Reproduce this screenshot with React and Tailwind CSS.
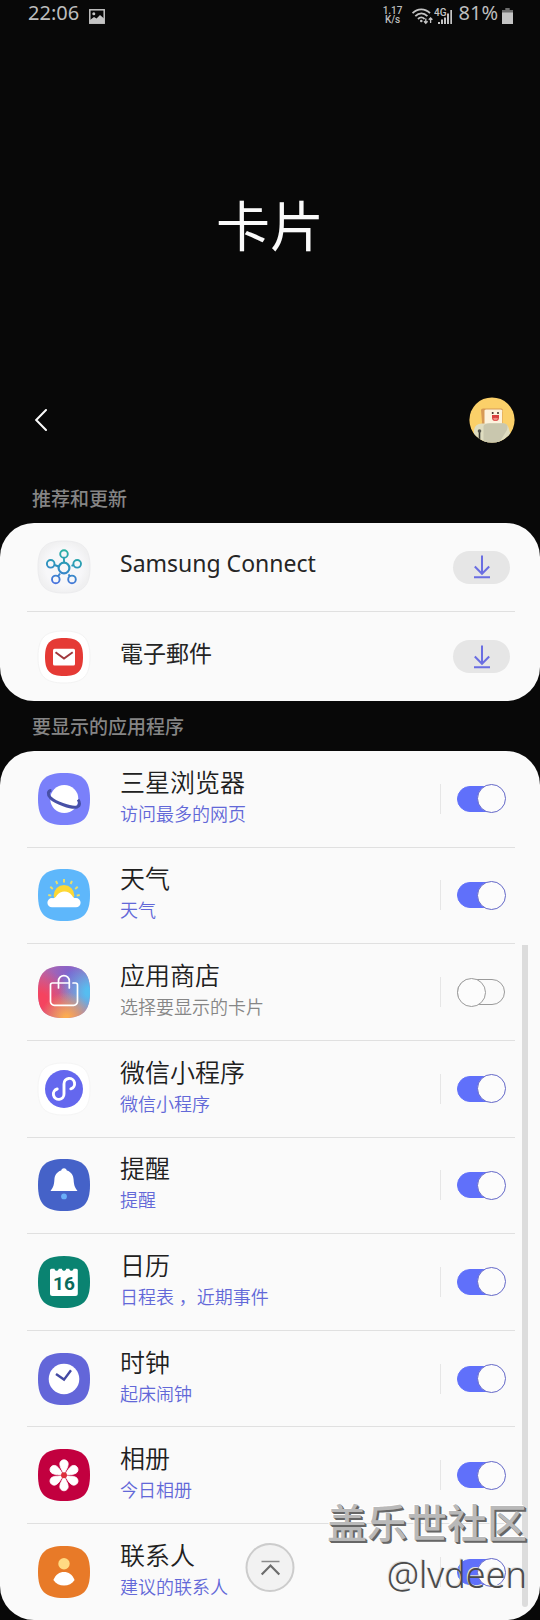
import { useState } from 'react';

const SQUIRCLE = 'M26 0C45 0 52 7 52 26S45 52 26 52 0 45 0 26 7 0 26 0Z';

// App icons
const AppIcon = ({ bg, border, children }) => (
  <svg viewBox="0 0 52 52" className="h-[52px] w-[52px] shrink-0 overflow-visible" aria-hidden="true">
    <path d={SQUIRCLE} fill={bg} stroke={border || 'none'} />
    {children}
  </svg>
);

const ConnectIcon = () => (
  <AppIcon bg="url(#connect-bg)" border="#ececee">
    <defs>
      <radialGradient id="connect-bg">
        <stop offset="0.7" stopColor="#f7f7f9" />
        <stop offset="1" stopColor="#f0f0f1" />
      </radialGradient>
      <linearGradient id="connect" gradientUnits="userSpaceOnUse" x1="30" y1="8" x2="22" y2="43">
        <stop offset="0" stopColor="#2bb5a0" />
        <stop offset="0.5" stopColor="#2c93bd" />
        <stop offset="1" stopColor="#4a74dd" />
      </linearGradient>
    </defs>
    <g fill="none" stroke="url(#connect)" strokeWidth="1.9">
      <circle cx="26" cy="27" r="5.4" strokeWidth="2.2" />
      <circle cx="26" cy="13" r="3.8" />
      <circle cx="12.7" cy="22.8" r="3.8" />
      <circle cx="39.2" cy="22.8" r="3.8" />
      <circle cx="17.8" cy="38.4" r="3.8" />
      <circle cx="34" cy="38.4" r="3.8" />
      <path d="M25.9 17L26.1 21.5M16.5 24L20.7 25.5M35.6 24L33.5 24.8M20.2 35.2L22 32.5M31.8 35.2L30.5 33.4" />
    </g>
  </AppIcon>
);

const EmailIcon = () => (
  <AppIcon bg="#ffffff" border="#f3f3f3">
    <path d="M26 7C40 7 45 12 45 26S40 45 26 45 7 40 7 26 12 7 26 7Z" fill="#e53a35" />
    <rect x="15" y="17.7" width="22" height="16.8" rx="1.5" fill="#fff" />
    <path d="M17.5 21.3L26 27.5L34.7 21.3" fill="none" stroke="#a0383d" strokeWidth="2" />
  </AppIcon>
);

const BrowserIcon = () => (
  <AppIcon bg="#7a80fa">
    <circle cx="26.3" cy="26" r="14" fill="#fff" />
    <path
      d="M13.4 17.6C9.8 17.8 9.2 21.5 12.5 24.8C17.5 29.5 33 35.6 39 34C42.4 32.9 42 29 40 26.6"
      fill="none"
      stroke="#4750a6"
      strokeWidth="3"
    />
  </AppIcon>
);

const WeatherIcon = () => (
  <AppIcon bg="#5eb7fb">
    <circle cx="26" cy="26.3" r="10.3" fill="#fdd835" />
    <path
      d="M26 10v3.6M18 12l1.4 3M34 12l-1.4 3M12.3 17.8l2.5 2.2M39.7 17.8l-2.5 2.2M10.3 26l3 .6M41.7 26l-3 .6"
      stroke="#e9df6b"
      strokeWidth="1.9"
    />
    <path
      d="M14 38.3A4.6 4.6 0 0 1 14 29.1C16.5 29.4 17.5 28.5 18.8 26.5C22.5 21 30.5 21 34 26.5C35.2 28.5 36 29.2 38 29.1A4.6 4.6 0 0 1 38 38.3Z"
      fill="#fff"
    />
  </AppIcon>
);

const StoreIcon = () => (
  <AppIcon bg="#b866a8">
    <defs>
      <radialGradient id="store-red" cx="0.05" cy="0.65" r="0.6">
        <stop offset="0.2" stopColor="#f5435f" />
        <stop offset="1" stopColor="#f5435f" stopOpacity="0" />
      </radialGradient>
      <radialGradient id="store-blue" cx="1" cy="0.5" r="0.6">
        <stop offset="0.15" stopColor="#56bdf0" />
        <stop offset="1" stopColor="#56bdf0" stopOpacity="0" />
      </radialGradient>
      <radialGradient id="store-violet" cx="0.62" cy="0.15" r="0.55">
        <stop offset="0" stopColor="#7d62cf" />
        <stop offset="1" stopColor="#7d62cf" stopOpacity="0" />
      </radialGradient>
      <radialGradient id="store-orange" cx="0.55" cy="1" r="0.5">
        <stop offset="0.1" stopColor="#fbab50" />
        <stop offset="1" stopColor="#fbab50" stopOpacity="0" />
      </radialGradient>
    </defs>
    <path d={SQUIRCLE} fill="url(#store-violet)" />
    <path d={SQUIRCLE} fill="url(#store-red)" />
    <path d={SQUIRCLE} fill="url(#store-blue)" />
    <path d={SQUIRCLE} fill="url(#store-orange)" />
    <path
      d="M30.5 17H14.5a2 2 0 0 0-2 2V35.5a3.8 3.8 0 0 0 3.8 3.8H35.7a3.8 3.8 0 0 0 3.8-3.8V19a2 2 0 0 0-2-2H35M20.5 22V15a5.4 5.4 0 0 1 10.8 0V22"
      fill="none"
      stroke="#fff"
      strokeWidth="1.7"
      strokeLinecap="round"
    />
  </AppIcon>
);

const MiniProgramIcon = () => (
  <AppIcon bg="#ffffff" border="#f5f5f5">
    <circle cx="26" cy="26" r="19" fill="#6467ee" />
    <path
      d="M32.8 25.8A5.3 5.3 0 1 0 26 20.9V30.9A5.3 5.3 0 1 1 19.2 26"
      fill="none"
      stroke="#fff"
      strokeWidth="2.9"
      strokeLinecap="round"
    />
  </AppIcon>
);

const ReminderIcon = () => (
  <AppIcon bg="#4562c8">
    <path
      d="M26 9.2C27.7 9.2 28.6 10.2 28.8 11.6C33.5 13 35.3 16.5 35.6 20.5C35.9 25.5 36.5 28 39.5 32H12.5C15.5 28 16.1 25.5 16.4 20.5C16.7 16.5 18.5 13 23.2 11.6C23.4 10.2 24.3 9.2 26 9.2Z"
      fill="#fff"
    />
    <circle cx="26" cy="37.4" r="2.9" fill="#6aaef8" />
  </AppIcon>
);

const CalendarIcon = () => (
  <AppIcon bg="#0a8371">
    <path
      d="M13.5 12.7H16.5C16.8 15.4 20.4 15.4 20.7 12.7H23.9C24.2 15.4 27.8 15.4 28.1 12.7H31.3C31.6 15.4 35.2 15.4 35.5 12.7H38.3Q39.8 12.7 39.8 14.2V37.5Q39.8 40 37.3 40H14.5Q12 40 12 37.5V14.2Q12 12.7 13.5 12.7Z"
      fill="#fff"
    />
    <text x="26" y="34" textAnchor="middle" fontFamily="Roboto, sans-serif" className="fill-[#0a6b5c] text-[19px] font-bold">
      16
    </text>
  </AppIcon>
);

const ClockIcon = () => (
  <AppIcon bg="#6366d9">
    <circle cx="26" cy="26" r="15.3" fill="#fff" />
    <path d="M18 21L26 26.6L33 17.2" fill="none" stroke="#444aa3" strokeWidth="2.4" />
  </AppIcon>
);

const GalleryIcon = () => (
  <AppIcon bg="#c2003f">
    {[0, 60, 120, 180, 240, 300].map((angle) => (
      <path
        key={angle}
        d="M26 25.5C24.5 21.5 21.8 18.5 21.8 15A4.2 4.2 0 0 1 30.2 15C30.2 18.5 27.5 21.5 26 25.5Z"
        fill="#fff"
        stroke="#fff"
        strokeWidth="0.8"
        transform={`rotate(${angle} 26 26.3)`}
      />
    ))}
    <circle cx="26" cy="26.3" r="3" fill="#dd2f3c" />
  </AppIcon>
);

const ContactsIcon = () => (
  <AppIcon bg="#e87a28">
    <circle cx="26" cy="17.8" r="5.7" fill="#ffda82" />
    <path d="M15.4 34C17.5 28.5 21.5 25.9 26 25.9S34.5 28.5 36.6 34C34 37.8 30.5 39.6 26 39.6S18 37.8 15.4 34Z" fill="#fff" />
  </AppIcon>
);

// Status bar
const StatusBar = () => (
  <div className="flex h-[26px] items-center justify-between pl-7 pr-[27px] text-[20px] text-[#bdbdbd]">
    <div className="flex items-center gap-[10px]">
      <span>22:06</span>
      <svg viewBox="0 0 16 15" className="mt-[7px] h-[15px] w-4" fill="none" aria-hidden="true">
        <rect x="0.8" y="0.8" width="14.4" height="13.4" stroke="#c4c4c4" strokeWidth="1.5" />
        <circle cx="4.8" cy="4.8" r="1.5" fill="#c4c4c4" />
        <path d="M1 11L5 8L7.5 9.5L11 6L15 9.5V14H1Z" fill="#c4c4c4" />
      </svg>
    </div>
    <div className="flex items-center">
      <span className="mr-[9px] mt-1 flex flex-col items-center font-[Roboto,sans-serif] text-[10px] font-medium leading-[9px]">
        <span>1.17</span>
        <span>K/s</span>
      </span>
      <svg viewBox="0 0 22 17" className="mt-[6px] h-[17px] w-[22px]" fill="none" stroke="#c4c4c4" strokeWidth="1.8" aria-hidden="true">
        <path d="M0.6 5.2C5.5 0 13 0 18 5.2M3.3 8.2C7 4.5 11.8 4.5 15.4 8.2M6 11C8 9 10.5 9 12.6 11" />
        <circle cx="9.3" cy="13" r="1.3" fill="#c4c4c4" stroke="none" />
        <path d="M13.8 10.5V15M12 13.3L13.8 15.2L15.6 13.3M18.6 15V10M16.8 11.8L18.6 9.9L20.4 11.8" strokeWidth="1.3" />
      </svg>
      <svg viewBox="0 0 19 17" className="mr-[6px] mt-[6px] h-[17px] w-[19px]" fill="#c4c4c4" aria-hidden="true">
        <text x="0" y="8" fontFamily="Roboto, sans-serif" className="text-[10px] font-medium">4G</text>
        <path d="M4 14h2v2h-2zM7 11.5h2V16H7zM10 9.5h2V16h-2zM13 5.5h2V16h-2zM16.3 2h1.7V16h-1.7z" />
      </svg>
      <span className="mr-1">81%</span>
      <svg viewBox="0 0 11 16" className="mt-[6px] h-4 w-[11px]" aria-hidden="true">
        <path d="M3.3 0H7.7V2H11V5H0V2H3.3Z" fill="#6e6e6e" />
        <path d="M0 4.5H11V16H0Z" fill="#c4c4c4" />
      </svg>
    </div>
  </div>
);

const Avatar = () => (
  <svg viewBox="0 0 46 46" className="h-[46px] w-[46px]" aria-hidden="true">
    <defs>
      <clipPath id="avatar">
        <circle cx="23" cy="23" r="22.6" />
      </clipPath>
    </defs>
    <g clipPath="url(#avatar)">
      <rect width="46" height="46" fill="#fbd069" />
      <path d="M12 13Q12 11.5 14 11.5H32Q34.5 11.5 33.5 14V28H14Q12 27 13 25Z" fill="#d79a55" />
      <path d="M15.5 14Q15 12.5 17 12.5H31.5Q34 12.5 33 15V27H15.5Z" fill="#fdf3dd" />
      <path d="M5 46V33Q6 26 14 26.5H34Q39 27 40 32L44 46Z" fill="#dfddc0" />
      <path d="M14.5 29Q16 26 22 26.3H35Q40 27 38 33L30 46H14.5Z" fill="#c9c7ae" />
      <circle cx="23.7" cy="16" r="1" fill="#3a2a20" />
      <circle cx="29" cy="16" r="1" fill="#3a2a20" />
      <path d="M23 18H30V20.5A3.5 3.5 0 0 1 23 20.5Z" fill="#d8413e" />
      <path d="M23.8 21.5Q26.5 20 29.2 21.5Q26.5 25.5 23.8 21.5Z" fill="#f08a80" />
      <path d="M10.5 46V35" stroke="#35352f" strokeWidth="1.6" />
      <circle cx="10.5" cy="34" r="1.8" fill="#55564d" />
    </g>
  </svg>
);

const SectionTitle = ({ children }) => (
  <h2 className="flex h-[50px] items-center px-8 pt-[2px] text-[19px] font-medium text-[#858585]">{children}</h2>
);

const suggested = [
  { name: 'Samsung Connect', icon: ConnectIcon },
  { name: '電子郵件', icon: EmailIcon },
];

const apps = [
  { id: 'browser', name: '三星浏览器', detail: '访问最多的网页', icon: BrowserIcon },
  { id: 'weather', name: '天气', detail: '天气', icon: WeatherIcon },
  { id: 'store', name: '应用商店', detail: '选择要显示的卡片', icon: StoreIcon },
  { id: 'mini', name: '微信小程序', detail: '微信小程序', icon: MiniProgramIcon },
  { id: 'reminder', name: '提醒', detail: '提醒', icon: ReminderIcon },
  { id: 'calendar', name: '日历', detail: '日程表 ，近期事件', icon: CalendarIcon },
  { id: 'clock', name: '时钟', detail: '起床闹钟', icon: ClockIcon },
  { id: 'gallery', name: '相册', detail: '今日相册', icon: GalleryIcon },
  { id: 'contacts', name: '联系人', detail: '建议的联系人', icon: ContactsIcon },
];

const SuggestedRow = ({ name, icon: Icon }) => (
  <li className="ml-[27px] mr-[25px] flex h-[89px] items-center border-b border-[#e0e0e0] pl-[11px] pr-[5px] last:border-b-0">
    <Icon />
    <span className="ml-[30px] flex-1 pb-2 text-[23px] leading-8 text-[#252525]">{name}</span>
    <button type="button" aria-label={`下载 ${name}`} className="flex h-[33px] w-[57px] items-center justify-center rounded-full bg-[#e6e6e6]">
      <svg viewBox="0 0 16 24" className="h-6 w-4" fill="none" stroke="#6a6ee2" strokeWidth="2" aria-hidden="true">
        <path d="M8 0.5V19M0.8 11.5L8 18.8L15.2 11.5M0 22.2H16" />
      </svg>
    </button>
  </li>
);

const AppRow = ({ id, name, detail, icon: Icon, checked, onChange }) => (
  <li className="ml-[27px] mr-[25px] flex min-h-24 flex-1 items-center border-b border-[#e0e0e0] pl-[11px] pr-[9px] last:border-b-0">
    <Icon />
    <label htmlFor={id} className="ml-[30px] flex-1 pb-[2px] font-[350]">
      <span className="block text-[25px] leading-8 text-[#202020]">{name}</span>
      <span className={`block text-[18px] leading-8 ${checked ? 'text-[#6268d8]' : 'text-[#868686]'}`}>{detail}</span>
    </label>
    <span className="mr-4 h-[30px] w-px bg-[#e6e6e6]" />
    <input
      id={id}
      type="checkbox"
      role="switch"
      checked={checked}
      onChange={onChange}
      className="relative flex h-[29px] w-[49px] appearance-none items-center before:h-[26px] before:w-[48px] before:rounded-full before:border before:border-[#9a9a9a] after:absolute after:left-0 after:top-0 after:h-[29px] after:w-[29px] after:rounded-full after:border after:border-[#9a9a9a] after:bg-[#fcfcfc] checked:before:border-[#6070fa] checked:before:bg-[#6070fa] checked:after:left-5 checked:after:border-[#6468c8]"
    />
  </li>
);

function App() {
  const [hidden, setHidden] = useState(['store']);

  const toggle = (id) =>
    setHidden((list) => (list.includes(id) ? list.filter((item) => item !== id) : [...list, id]));

  return (
    <div className="relative flex min-h-screen flex-col bg-[#080808] font-['Noto_Sans','Noto_Sans_CJK_SC',sans-serif]">
      <StatusBar />

      <h1 className="pb-[131px] pt-[160px] text-center text-[54px] leading-[80px] text-[#fafafa]">卡片</h1>

      <header className="mb-[30px] flex items-center justify-between pl-[33px] pr-[25px]">
        <button type="button" aria-label="返回" className="flex h-8 w-4 items-center justify-center">
          <svg viewBox="0 0 12 22" className="h-[22px] w-3" fill="none" stroke="#fafafa" strokeWidth="2" strokeLinecap="round" aria-hidden="true">
            <path d="M11 1L1.2 11L11 21" />
          </svg>
        </button>
        <button type="button" aria-label="帐户">
          <Avatar />
        </button>
      </header>

      <SectionTitle>推荐和更新</SectionTitle>
      <ul className="rounded-[34px] bg-[#fafafa]">
        {suggested.map((app) => (
          <SuggestedRow key={app.name} {...app} />
        ))}
      </ul>

      <SectionTitle>要显示的应用程序</SectionTitle>
      <ul className="flex flex-1 flex-col rounded-[34px] bg-[#fafafa]">
        {apps.map((app) => (
          <AppRow key={app.id} {...app} checked={!hidden.includes(app.id)} onChange={() => toggle(app.id)} />
        ))}
      </ul>

      {/* Scroll thumb */}
      <div className="absolute bottom-[13px] right-3 h-[662px] w-[6px] rounded-b-full bg-[#dcdcdc]" />

      {/* Back to top */}
      <button
        type="button"
        aria-label="回到顶部"
        className="absolute bottom-7 left-1/2 flex h-[49px] w-[49px] -translate-x-1/2 items-center justify-center rounded-full border-2 border-[#cccccc] bg-[#f2f2f2]"
      >
        <svg viewBox="0 0 20 16" className="h-4 w-5" fill="none" aria-hidden="true">
          <path d="M1 1.5H19" stroke="#8a8a8a" strokeWidth="1.6" />
          <path d="M1.2 14.5L10 5.5L18.8 14.5" stroke="#6c6c6c" strokeWidth="2.2" />
        </svg>
      </button>

      {/* Watermark */}
      <div className="pointer-events-none absolute bottom-5 right-[13px] text-right">
        <p className="text-[40px] font-medium leading-[54px] text-[#b9b9b9] [text-shadow:1px_1px_0_#666,2px_2px_0_#666,-1px_-1px_0_#fff]">盖乐世社区</p>
        <p className="text-[36px] font-light leading-[50px] text-[#4a4a4a] [text-shadow:-1px_-1px_0_#dddddd]">@lvdeen</p>
      </div>
    </div>
  );
}

export default App;
